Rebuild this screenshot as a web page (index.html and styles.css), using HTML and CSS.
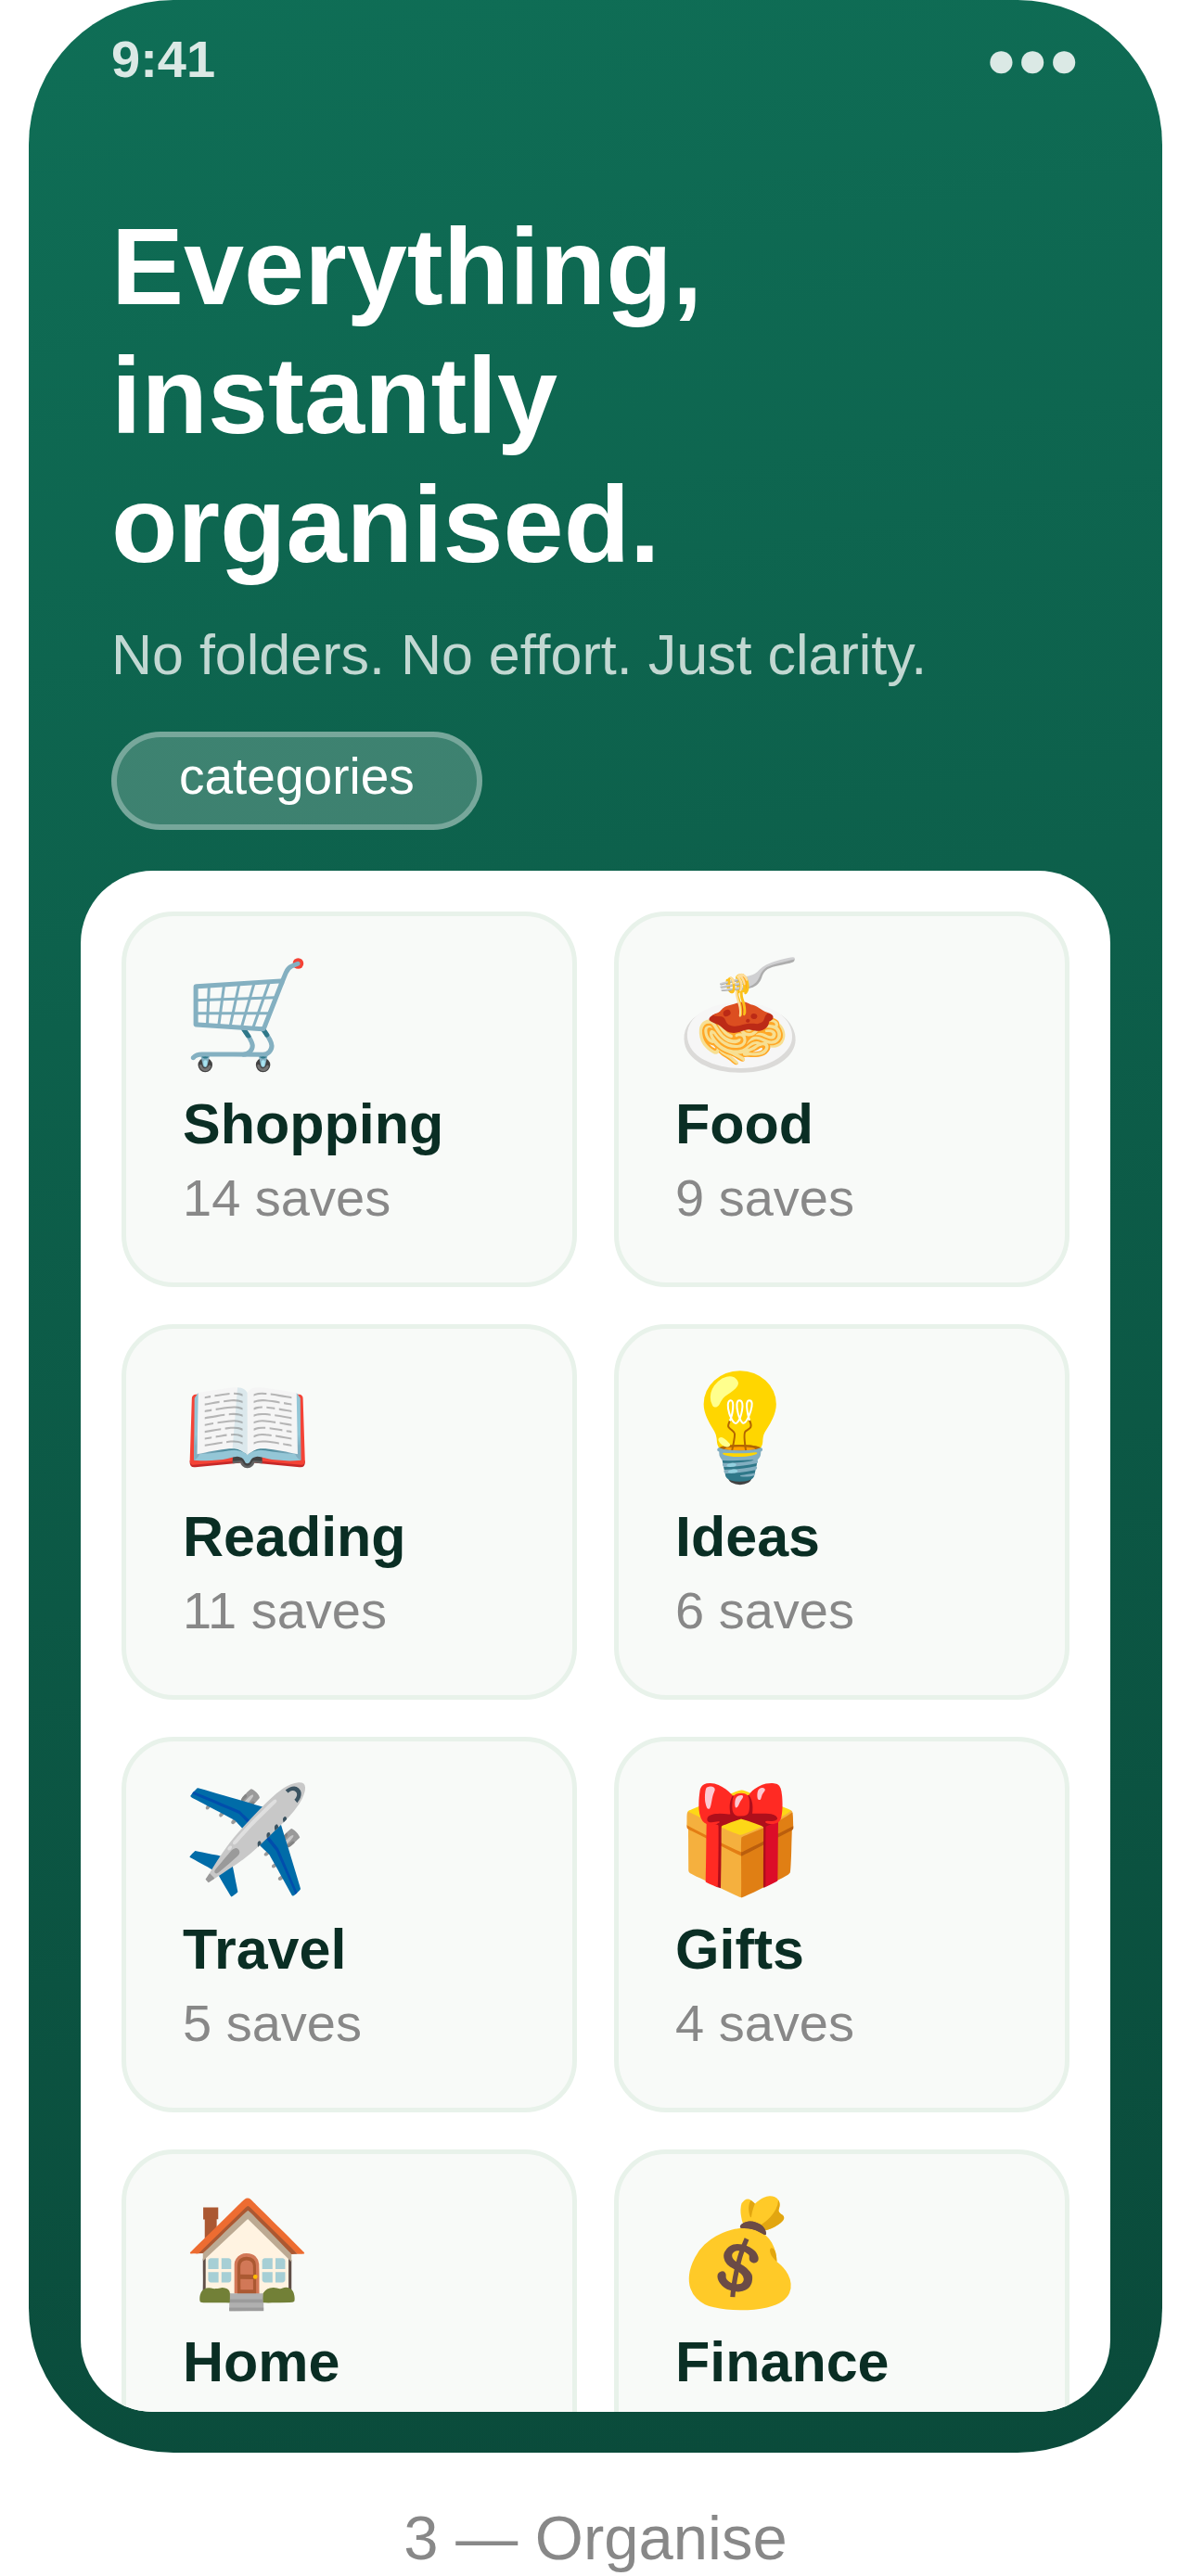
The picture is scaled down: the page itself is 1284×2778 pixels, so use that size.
FILE: index.html
```html
<!DOCTYPE html>
<html lang="en">
<head>
    <meta charset="UTF-8">
    <meta name="viewport" content="width=device-width, initial-scale=1.0">
    <title>Organise</title>
    <link rel="stylesheet" href="styles.css">
</head>
<body>
    <main class="phone">
        <header class="status-bar">
            <span>9:41</span>
            <span>●●●</span>
        </header>

        <section class="intro">
            <h1>Everything,<br>instantly<br>organised.</h1>
            <p>No folders. No effort. Just clarity.</p>
            <span class="tag">categories</span>
        </section>

        <section class="panel">
            <div class="card"><span class="icon">🛒</span><h2>Shopping</h2><p>14 saves</p></div>
            <div class="card"><span class="icon">🍝</span><h2>Food</h2><p>9 saves</p></div>
            <div class="card"><span class="icon">📖</span><h2>Reading</h2><p>11 saves</p></div>
            <div class="card"><span class="icon">💡</span><h2>Ideas</h2><p>6 saves</p></div>
            <div class="card"><span class="icon">✈️</span><h2>Travel</h2><p>5 saves</p></div>
            <div class="card"><span class="icon">🎁</span><h2>Gifts</h2><p>4 saves</p></div>
            <div class="card"><span class="icon">🏠</span><h2>Home</h2></div>
            <div class="card"><span class="icon">💰</span><h2>Finance</h2></div>
        </section>
    </main>
    <p class="caption">3 — Organise</p>
</body>
</html>
```

FILE: styles.css
```css
* {
    box-sizing: border-box;
}

body {
    height: 100vh;
    margin: 0;
    padding: 0 31px;
    display: flex;
    flex-direction: column;
    overflow: hidden;
    background: #fff;
    font-family: "Liberation Sans", Arial, sans-serif;
}

h1, h2, p {
    margin: 0;
    font-size: inherit;
}

.phone {
    flex: 1;
    min-height: 0;
    display: flex;
    flex-direction: column;
    padding: 0 56px 44px;
    border-radius: 156px;
    background: linear-gradient(170deg, #0f6e56, #0a4a3a);
    color: #fff;
}

.status-bar {
    display: flex;
    justify-content: space-between;
    padding: 32px 33px 0;
    font-size: 56px;
    font-weight: bold;
    line-height: 64px;
    color: rgba(255, 255, 255, 0.85);
}

.intro {
    padding: 122px 33px 44px;
}

.intro h1 {
    font-size: 117px;
    line-height: 139px;
}

.intro p {
    margin: 36px 0 48px;
    font-size: 61px;
    line-height: 70px;
    color: rgba(255, 255, 255, 0.75);
}

.tag {
    display: block;
    width: fit-content;
    padding: 10px 67px 20px;
    border: 6px solid rgba(255, 255, 255, 0.3);
    border-radius: 56px;
    background: rgba(255, 255, 255, 0.2);
    font-size: 55px;
    line-height: 64px;
}

.panel {
    flex: 1;
    min-height: 0;
    display: grid;
    grid-template-columns: 1fr 1fr;
    grid-auto-rows: 405px;
    gap: 40px;
    padding: 44px;
    overflow: hidden;
    border-radius: 78px;
    background: #fff;
}

.card {
    padding: 42px 61px;
    border: 5px solid #e8f2ea;
    border-radius: 56px;
    background: #f8faf8;
}

.icon {
    display: block;
    margin-bottom: 17px;
    font-size: 112px;
    line-height: 130px;
}

.card h2 {
    font-size: 61px;
    line-height: 70px;
    color: #0a2e24;
}

.card p {
    margin-top: 13px;
    font-size: 56px;
    line-height: 64px;
    color: #888;
}

.caption {
    padding: 54px 0 3px;
    font-size: 67px;
    line-height: 76px;
    text-align: center;
    color: #888;
}
```
